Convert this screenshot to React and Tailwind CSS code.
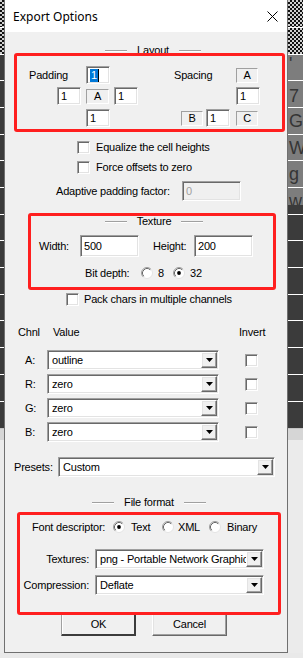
import React from 'react';

const sunken =
  'border border-t-[#a0a0a0] border-l-[#a0a0a0] border-r-white border-b-white shadow-[inset_1px_1px_0_#696969,inset_-1px_-1px_0_#e3e3e3]';
const raised =
  'border border-t-white border-l-white border-r-[#696969] border-b-[#696969] shadow-[inset_-1px_-1px_0_#a0a0a0,inset_1px_1px_0_#e3e3e3]';

function Edit({ className = '', children }) {
  return (
    <div className={`${sunken} bg-white flex items-center pl-[3px] ${className}`}>{children}</div>
  );
}

function LabelBox({ className = '', children }) {
  return (
    <div
      className={`border border-t-[#a0a0a0] border-l-[#a0a0a0] border-r-white border-b-white h-[15px] flex items-center justify-center ${className}`}
    >
      {children}
    </div>
  );
}

function Check() {
  return <div className={`${sunken} bg-white w-[13px] h-[13px] shrink-0`} />;
}

function Radio({ on }) {
  return (
    <svg width="12" height="12" viewBox="0 0 12 12" className="shrink-0">
      <circle cx="6" cy="6" r="5.5" fill="#fff" stroke="#e3e3e3" />
      <path d="M2.11 9.89 A5.5 5.5 0 0 1 9.89 2.11" fill="none" stroke="#a0a0a0" />
      <path d="M2.82 9.18 A4.5 4.5 0 0 1 9.18 2.82" fill="none" stroke="#696969" />
      {on && <circle cx="6" cy="6" r="1.9" fill="#000" />}
    </svg>
  );
}

function Combo({ className = '', text }) {
  return (
    <div className={`${sunken} bg-white h-[20px] p-[1px] flex items-center ${className}`}>
      <span className="flex-1 pl-[3px] overflow-hidden whitespace-nowrap">{text}</span>
      <div className={`${raised} bg-[#f0f0f0] w-[16px] h-[16px] shrink-0 flex items-center justify-center`}>
        <svg width="7" height="4" viewBox="0 0 7 4">
          <polygon points="0,0 7,0 3.5,4" fill="#000" />
        </svg>
      </div>
    </div>
  );
}

function Heading({ label, className = '' }) {
  return (
    <div className={`h-[13px] flex items-center justify-center gap-[10px] ${className}`}>
      <div className="w-[22px] h-[2px] border-t border-t-[#a0a0a0] border-b border-b-white" />
      <span>{label}</span>
      <div className="w-[22px] h-[2px] border-t border-t-[#a0a0a0] border-b border-b-white" />
    </div>
  );
}

function Strip({ letters }) {
  const gray = [
    { h: 'h-[26px]', c: "'", pt: 'pt-0' },
    { h: 'h-[27px]', c: '7', pt: 'pt-[6px]' },
    { h: 'h-[27px]', c: 'G', pt: 'pt-[4px]' },
    { h: 'h-[26px]', c: 'W', pt: 'pt-[4px]' },
    { h: 'h-[27px]', c: 'g', pt: 'pt-[4px]' },
    { h: 'h-[18px]', c: 'w', pt: 'pt-[4px]' },
  ];
  return (
    <div className="flex flex-col h-full overflow-hidden">
      <div className="h-[27px] bg-[repeating-conic-gradient(#111_0_25%,#d0d0d0_0_50%)] bg-[length:4px_4px]" />
      <div className="h-[27px] border-t border-white bg-[repeating-conic-gradient(#111_0_25%,#d0d0d0_0_50%)] bg-[length:4px_4px]" />
      <div className={letters ? 'bg-[#7d7d7d]' : 'bg-[#3b3b3b]'}>
        {gray.map((r, i) => (
          <div
            key={i}
            className={`${r.h} ${r.pt} ${i < 5 || true ? 'border-t border-white' : ''} pl-[1px] text-[18px] leading-none text-[#353535] font-['Liberation_Sans',Arial,sans-serif] overflow-hidden`}
          >
            {letters ? r.c : ''}
          </div>
        ))}
      </div>
      <div className="bg-[#3b3b3b]">
        <div className="h-[9px]" />
        {['h-[26px]', 'h-[27px]', 'h-[27px]', 'h-[26px]', 'h-[27px]', 'h-[27px]', 'h-[27px]', 'h-[27px]'].map((h, i) => (
          <div key={i} className={`${h} border-t border-white`} />
        ))}
      </div>
      <div className="h-[12px] bg-[#d6d6d6] border-t border-[#c4c4c4]" />
      <div className="flex-1 bg-[#ebebeb]" />
    </div>
  );
}

export default function App() {
  return (
    <div className="w-[303px] h-[658px] overflow-hidden bg-[#ebebeb] flex flex-col">
      <div className="flex h-[653px]">
        <div className="w-[4px] shrink-0">
          <Strip letters={false} />
        </div>

        <div className="relative w-[284px] shrink-0 border-l border-r border-b border-[#707070] bg-[#f0f0f0] flex flex-col font-['Liberation_Sans',Arial,sans-serif] text-[11px] tracking-[-0.2px] leading-[13px] text-black">
          <div className="h-[32px] bg-white flex items-center pl-[8px] pr-[9px]">
            <span className="font-['Noto_Sans',sans-serif] text-[12px] tracking-normal">Export Options</span>
            <svg width="11" height="11" viewBox="0 0 11 11" className="ml-auto">
              <path d="M0.5 0.5 L10.5 10.5 M10.5 0.5 L0.5 10.5" stroke="#000" strokeWidth="1" />
            </svg>
          </div>

          <Heading label="Layout" className="mt-[12px] pl-[14px]" />

          <div className="mt-[9px] h-[18px] flex items-center">
            <span className="ml-[24px] w-[57px]">Padding</span>
            <Edit className="w-[24px] h-[18px]">
              <span className="bg-[#0078d7] text-white px-[1px]">1</span>
              <span className="w-px h-[13px] bg-black" />
            </Edit>
            <span className="ml-[64px] w-[62px]">Spacing</span>
            <LabelBox className="w-[22px]">A</LabelBox>
          </div>

          <div className="mt-[3px] h-[18px] flex items-center">
            <Edit className="ml-[52px] w-[24px] h-[18px]">1</Edit>
            <LabelBox className="ml-[5px] w-[23px]">A</LabelBox>
            <Edit className="ml-[5px] w-[24px] h-[18px]">1</Edit>
            <Edit className="ml-[98px] w-[24px] h-[18px]">1</Edit>
          </div>

          <div className="mt-[4px] h-[18px] flex items-center">
            <Edit className="ml-[81px] w-[24px] h-[18px]">1</Edit>
            <LabelBox className="ml-[71px] w-[22px]">B</LabelBox>
            <Edit className="ml-[3px] w-[24px] h-[18px]">1</Edit>
            <LabelBox className="ml-[6px] w-[22px]">C</LabelBox>
          </div>

          <div className="mt-[13px] h-[14px] flex items-center">
            <div className="ml-[72px]"><Check /></div>
            <span className="ml-[6px]">Equalize the cell heights</span>
          </div>

          <div className="mt-[6px] h-[14px] flex items-center">
            <div className="ml-[72px]"><Check /></div>
            <span className="ml-[6px]">Force offsets to zero</span>
          </div>

          <div className="mt-[7px] h-[20px] flex items-center">
            <span className="ml-[51px] w-[126px]">Adaptive padding factor:</span>
            <Edit className="w-[59px] h-[20px] !bg-[#f0f0f0] text-[#a0a0a0]">0</Edit>
          </div>

          <Heading label="Texture" className="mt-[14px] pl-[16px]" />

          <div className="mt-[7px] h-[22px] flex items-center">
            <span className="ml-[34px] w-[41px]">Width:</span>
            <Edit className="w-[59px] h-[22px]">500</Edit>
            <span className="ml-[14px] w-[41px]">Height:</span>
            <Edit className="w-[59px] h-[22px]">200</Edit>
          </div>

          <div className="mt-[9px] h-[14px] flex items-center">
            <span className="ml-[80px] w-[56px]">Bit depth:</span>
            <Radio />
            <span className="ml-[5px] w-[15px]">8</span>
            <Radio on />
            <span className="ml-[5px]">32</span>
          </div>

          <div className="mt-[12px] h-[14px] flex items-center">
            <div className="ml-[61px]"><Check /></div>
            <span className="ml-[5px]">Pack chars in multiple channels</span>
          </div>

          <div className="mt-[20px] h-[13px] flex items-center">
            <span className="ml-[13px] w-[35px]">Chnl</span>
            <span className="w-[186px]">Value</span>
            <span>Invert</span>
          </div>

          {[
            ['A:', 'outline', 'mt-[11px]'],
            ['R:', 'zero', 'mt-[4px]'],
            ['G:', 'zero', 'mt-[4px]'],
            ['B:', 'zero', 'mt-[4px]'],
          ].map(([l, v, mt]) => (
            <div key={l} className={`${mt} h-[20px] flex items-center`}>
              <span className="ml-[20px] w-[22px]">{l}</span>
              <Combo className="w-[172px]" text={v} />
              <div className="ml-[26px]"><Check /></div>
            </div>
          ))}

          <div className="mt-[15px] h-[20px] flex items-center">
            <span className="ml-[9px] w-[44px]">Presets:</span>
            <Combo className="w-[217px]" text="Custom" />
          </div>

          <Heading label="File format" className="mt-[19px] pl-[6px]" />

          <div className="mt-[11px] h-[14px] flex items-center">
            <span className="ml-[27px] w-[81px]">Font descriptor:</span>
            <Radio on />
            <span className="ml-[6px] w-[31px]">Text</span>
            <Radio />
            <span className="ml-[4px] w-[31px]">XML</span>
            <Radio />
            <span className="ml-[6px]">Binary</span>
          </div>

          <div className="mt-[15px] h-[20px] flex items-center">
            <span className="w-[90px] pr-[6px] text-right">Textures:</span>
            <Combo className="w-[169px]" text="png - Portable Network Graphics" />
          </div>

          <div className="mt-[6px] h-[20px] flex items-center">
            <span className="w-[90px] pr-[6px] text-right">Compression:</span>
            <Combo className="w-[169px]" text="Deflate" />
          </div>

          <div className="mt-[18px] h-[23px] flex items-center">
            <div className="ml-[56px] w-[75px] h-[23px] flex items-center justify-center border border-t-[#a0a0a0] border-l-[#a0a0a0] border-r-[#3c3c3c] border-b-[#3c3c3c] shadow-[inset_-1px_-1px_0_#3c3c3c,inset_1px_1px_0_#fff]">
              OK
            </div>
            <div className={`ml-[16px] w-[75px] h-[23px] flex items-center justify-center ${raised}`}>
              Cancel
            </div>
          </div>

          <div className="absolute left-[9px] top-[53px] w-[271px] h-[79px] border-[3px] border-[#ff1f1f] rounded-[3px]" />
          <div className="absolute left-[23px] top-[213px] w-[248px] h-[77px] border-[3px] border-[#ff1f1f] rounded-[3px]" />
          <div className="absolute left-[12px] top-[512px] w-[264px] h-[103px] border-[3px] border-[#ff1f1f] rounded-[3px]" />
        </div>

        <div className="flex-1">
          <Strip letters />
        </div>
      </div>
      <div className="flex-1 bg-[#e9e9e9]" />
    </div>
  );
}
